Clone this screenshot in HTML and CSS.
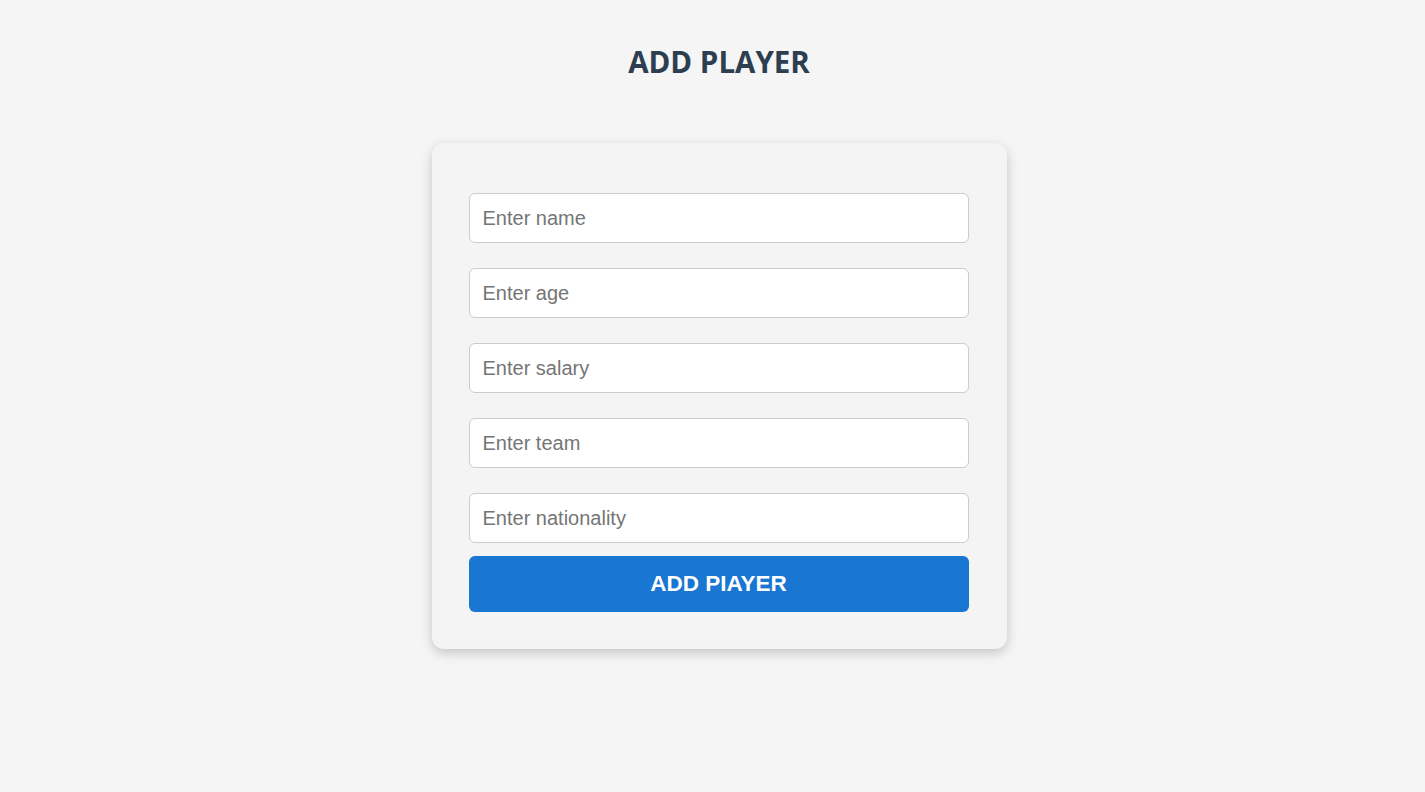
FILE: index.html
```html
<!DOCTYPE html>
<html lang="en">
<head>
<meta charset="utf-8">
<title>Add Player</title>
<link rel="stylesheet" href="styles.css">
</head>
<body>
<main class="page">
  <h1 class="title">ADD PLAYER</h1>
  <form class="card">
    <input class="field" type="text" placeholder="Enter name">
    <input class="field" type="text" placeholder="Enter age">
    <input class="field" type="text" placeholder="Enter salary">
    <input class="field" type="text" placeholder="Enter team">
    <input class="field last" type="text" placeholder="Enter nationality">
    <button class="submit" type="button">ADD PIAYER</button>
  </form>
</main>
</body>
</html>
```
FILE: styles.css
```css
html, body {
  margin: 0;
  padding: 0;
  background: #f5f5f5;
  min-height: 100%;
}
.page {
  display: flex;
  flex-direction: column;
  align-items: center;
  padding-top: 40px;
  padding-left: 13px;
  padding-bottom: 60px;
}
.title {
  margin: 0;
  font-family: "Open Sans", "Noto Sans", sans-serif;
  font-weight: 700;
  font-size: 29.5px;
  line-height: 44px;
  color: #2c3e50;
}
.card {
  margin-top: 59px;
  width: 575px;
  box-sizing: border-box;
  padding: 50px 37px 37px 37px;
  background: #f4f4f4;
  border-radius: 12px;
  box-shadow: 0 4px 12px rgba(0, 0, 0, 0.2);
  display: flex;
  flex-direction: column;
}
.field {
  height: 50px;
  box-sizing: border-box;
  width: 500px;
  margin: 0 0 25px 0;
  padding: 0 13px;
  border: 1px solid #cccccc;
  border-radius: 6px;
  background: #ffffff;
  font-family: "Liberation Sans", Arial, sans-serif;
  font-size: 20px;
  color: #333;
  outline: none;
}
.field::placeholder {
  color: #757575;
}
.field.last {
  margin-bottom: 13px;
}
.submit {
  height: 56px;
  width: 500px;
  border: none;
  border-radius: 6px;
  background: #1976d2;
  color: #ffffff;
  font-family: "Liberation Sans", Arial, sans-serif;
  font-weight: 700;
  font-size: 22.5px;
  cursor: pointer;
  padding: 0;
}
```
